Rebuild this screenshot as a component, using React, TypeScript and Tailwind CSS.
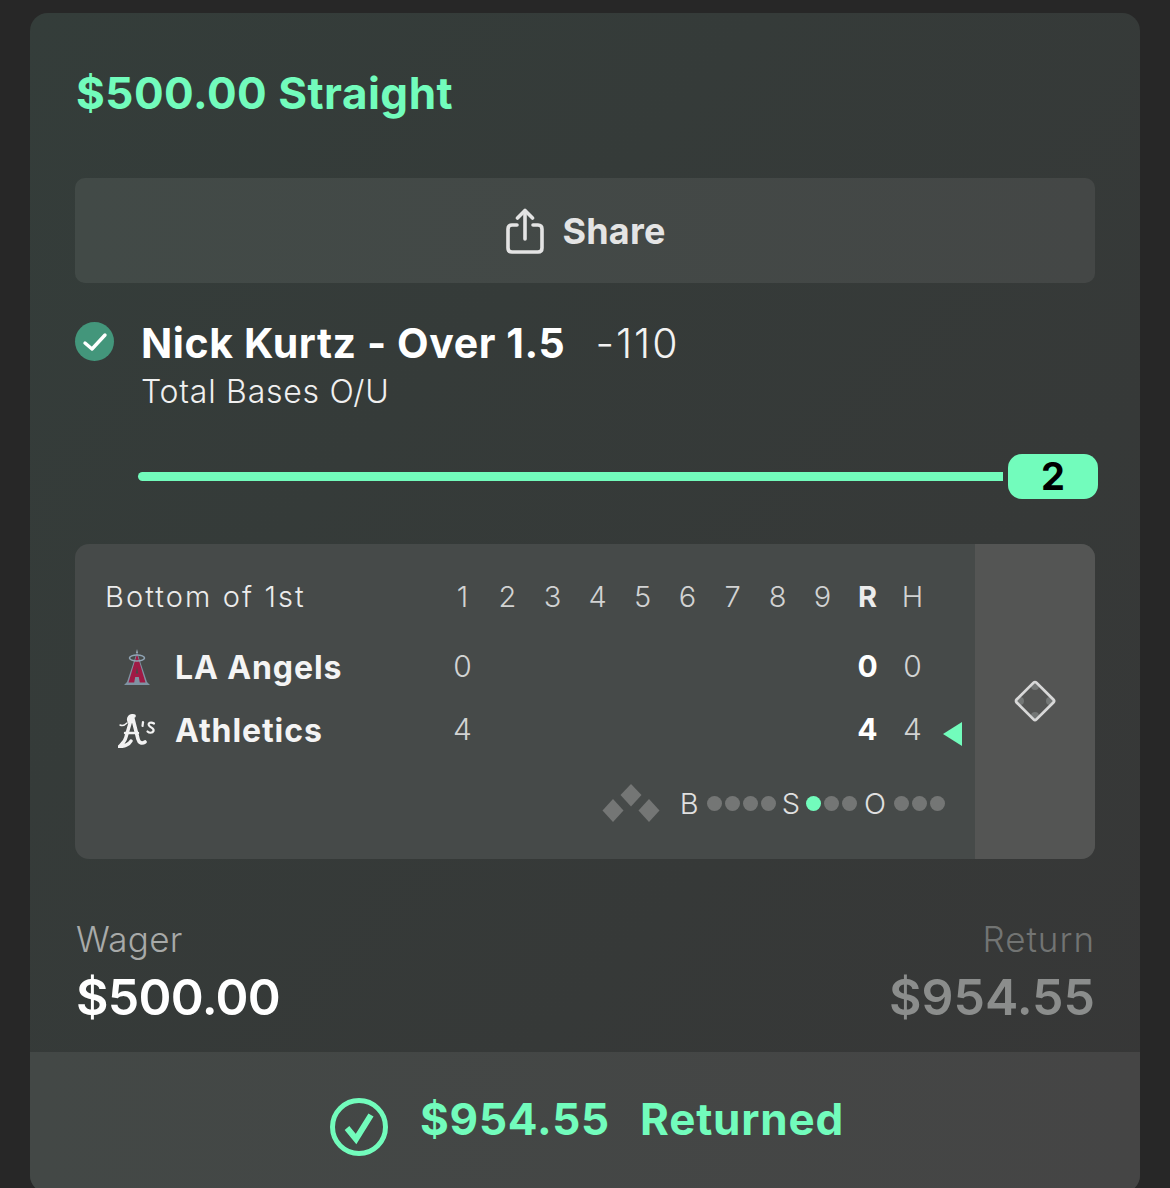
const font = { fontFamily: "Inter, sans-serif" };

const innings = ["1", "2", "3", "4", "5", "6", "7", "8", "9"];

const AngelsLogo = () => (
  <svg width="28" height="38" viewBox="0 0 28 38">
    <path d="M14 0 L15 4 H13 Z" fill="#9fb0bd" />
    <path d="M14 3 L24 33 L27 36 H1 L4 33 Z" fill="#7f93a3" />
    <path d="M14 5 L22.5 33.5 H16.8 L15.8 28 H12.2 L11.2 33.5 H5.5 Z" fill="#a01a45" />
    <path d="M14 18 L15.2 24.5 H12.8 Z" fill="#474a49" />
    <ellipse cx="14" cy="9" rx="7.5" ry="3" fill="none" stroke="#8fa3b3" strokeWidth="1.6" />
  </svg>
);

const AthleticsLogo = () => (
  <svg width="38" height="34" viewBox="0 0 38 34" fill="none" stroke="#f2f2f2" strokeLinecap="round">
    <path d="M16 2 C12 1 10 4 11 7 L15 5 L20 25 C21 29 24 30 27 28" strokeWidth="3.6" />
    <path d="M13 6 L8 23 C7 28 4 30 1 33 C6 32 11 31 13 27" strokeWidth="3.4" />
    <path d="M7 19 H20" strokeWidth="2.4" />
    <path d="M2 11 C4 12 7 11 9 9" strokeWidth="1.4" />
    <path d="M25 8 L24.5 12" strokeWidth="2.2" />
    <path d="M36 9.5 C33 7.5 29.5 9 31 11.5 C32.5 14 36.5 14 35.5 17 C34.5 19.5 31 19 29.5 17.5" strokeWidth="2.2" />
  </svg>
);

const ShareIcon = () => (
  <svg width="38" height="46" viewBox="0 0 38 46" fill="none" stroke="#e4e4e4" strokeWidth="3.6" strokeLinecap="round" strokeLinejoin="round">
    <path d="M11 17 H6 Q2 17 2 21 V40 Q2 44 6 44 H32 Q36 44 36 40 V21 Q36 17 32 17 H27" />
    <path d="M19 31 V3" />
    <path d="M11.5 10 L19 2.5 L26.5 10" />
  </svg>
);

const Dots = ({ count, active = -1 }: { count: number; active?: number }) => (
  <div className="flex gap-[3px]">
    {Array.from({ length: count }).map((_, i) => (
      <span
        key={i}
        className={i === active ? "size-[15px] rounded-full bg-[#72fcbc]" : "size-[15px] rounded-full bg-[#747675]"}
      />
    ))}
  </div>
);

const TeamRow = ({
  logo,
  name,
  first,
  total,
  hits,
  batting,
}: {
  logo: React.ReactNode;
  name: string;
  first: string;
  total: string;
  hits: string;
  batting?: boolean;
}) => (
  <div className="flex h-[63px] items-center">
    <div className="flex w-[73px] shrink-0 justify-center pr-[3px]">{logo}</div>
    <span className="mt-[1px] w-[265px] shrink-0 text-[32px] font-bold tracking-[0.9px] text-[#f4f4f4]">{name}</span>
    <div className="-mt-[2px] grid w-[495px] shrink-0 grid-cols-11 text-center text-[30px] font-light text-[#d2d3d3]">
      <span>{first}</span>
      <span className="col-start-10 font-bold text-white">{total}</span>
      <span>{hits}</span>
    </div>
    {batting && (
      <svg className="ml-[8px] mt-[6px]" width="19" height="24" viewBox="0 0 19 24">
        <path d="M0 12 L19 0 V24 Z" fill="#72fcbc" />
      </svg>
    )}
  </div>
);

export default function App() {
  return (
    <div className="h-[1188px] overflow-hidden bg-[#272727] pl-[30px] pr-[30px] pt-[13px]" style={font}>
      <div className="relative h-[1180px] rounded-[18px] bg-gradient-to-br from-[#343d3a] to-[#373737] px-[45px]">
        <h1 className="flex h-[165px] items-start pl-[1px] pt-[50px] text-[44px] leading-[60px] font-bold tracking-[0.5px] text-[#72fcbc]">
          $500.00 Straight
        </h1>

        <button className="flex h-[105px] w-full items-center justify-center gap-[18px] rounded-[10px] bg-gradient-to-r from-[#424a47] to-[#444746] pl-[2px] text-[36px] font-bold tracking-[0.2px] text-[#e4e4e4]">
          <ShareIcon />
          Share
        </button>

        <div className="mt-[35px] flex h-[94px] gap-[28px]">
          <span className="mt-[4px] flex size-[39px] shrink-0 items-center justify-center rounded-full bg-[#43967b]">
            <svg width="26" height="22" viewBox="0 0 26 22" fill="none" stroke="#fff" strokeWidth="3.4" strokeLinecap="round" strokeLinejoin="round">
              <path d="M3 12 L10 18 L23 4" />
            </svg>
          </span>
          <div className="-ml-[1px]">
            <div className="flex items-baseline gap-[30px] leading-[50px]">
              <span className="text-[41px] font-bold tracking-[0.6px] text-white">Nick Kurtz - Over 1.5</span>
              <span className="text-[41px] font-light tracking-[2px] text-[#f2f2f2]">-110</span>
            </div>
            <div className="text-[32px] leading-[47px] font-light tracking-[0.75px] text-[#f0f0f0]">Total Bases O/U</div>
          </div>
        </div>

        <div className="mt-[42px] flex h-[45px] items-center pl-[63px]">
          <div className="h-[9px] w-[865px] shrink-0 rounded-l-full bg-[#72fcbc]" />
          <span className="ml-[5px] flex h-[45px] w-[90px] shrink-0 items-center justify-center rounded-[14px] bg-[#72fcbc] text-[38px] font-bold text-black">
            2
          </span>
        </div>

        <div className="mt-[45px] flex h-[315px] overflow-hidden rounded-[14px] bg-[#464a49]">
          <div className="w-[900px] shrink-0">
            <div className="mt-[30px] flex h-[46px] items-center">
              <span className="w-[365px] shrink-0 pl-[30px] text-[29px] font-light tracking-[2.1px] text-[#ececec]">
                Bottom of 1st
              </span>
              <div className="grid w-[495px] shrink-0 grid-cols-11 text-center text-[29px] font-light text-[#d2d3d3]">
                {innings.map((inning) => (
                  <span key={inning}>{inning}</span>
                ))}
                <span className="font-bold text-[#ececec]">R</span>
                <span>H</span>
              </div>
            </div>

            <div className="mt-[16px] pl-[27px]">
              <TeamRow logo={<AngelsLogo />} name="LA Angels" first="0" total="0" hits="0" />
              <TeamRow logo={<AthleticsLogo />} name="Athletics" first="4" total="4" hits="4" batting />
            </div>

            <div className="mt-[20px] flex items-center justify-end pr-[30px]">
              <svg className="mr-[20px]" width="58" height="40" viewBox="0 0 58 40" fill="#747675">
                <path d="M29 0 L39.5 11 L29 22.5 L18.5 11 Z" />
                <path d="M11 15 L21.5 26.5 L11 38 L0.5 26.5 Z" />
                <path d="M47 15 L57.5 26.5 L47 38 L36.5 26.5 Z" />
              </svg>
              <span className="mr-[8px] text-[29px] font-light text-[#e0e0e0]">B</span>
              <Dots count={4} />
              <span className="mx-[6px] text-[29px] font-light text-[#e0e0e0]">S</span>
              <Dots count={3} active={0} />
              <span className="ml-[7px] mr-[8px] text-[29px] font-light text-[#e0e0e0]">O</span>
              <Dots count={3} />
            </div>
          </div>

          <div className="flex flex-1 justify-center bg-[#545554] pt-[136px]">
            <svg width="42" height="42" viewBox="0 0 42 42" fill="none">
              <circle cx="21" cy="6" r="4" fill="#737675" />
              <circle cx="21" cy="36" r="4" fill="#737675" />
              <circle cx="6" cy="21" r="4" fill="#737675" />
              <circle cx="36" cy="21" r="4" fill="#737675" />
              <rect x="7" y="7" width="28" height="28" transform="rotate(45 21 21)" rx="2" stroke="#d8d8d8" strokeWidth="2.8" />
            </svg>
          </div>
        </div>

        <div className="mt-[55px] flex justify-between">
          <div className="pl-[1px]">
            <div className="text-[35px] leading-[50px] font-light tracking-[0.3px] text-[#a8aaa9]">Wager</div>
            <div className="text-[50px] leading-[66px] font-semibold tracking-[-0.7px] text-white">$500.00</div>
          </div>
          <div className="text-right">
            <div className="text-[35px] leading-[50px] font-light tracking-[1px] text-[#727473]">Return</div>
            <div className="text-[50px] leading-[66px] font-semibold text-[#8b8d8c]">$954.55</div>
          </div>
        </div>

        <div className="absolute inset-x-0 top-[1039px] flex h-[141px] items-center justify-center overflow-hidden rounded-b-[18px] bg-gradient-to-r from-[#434846] to-[#454545] pb-[8px] pl-[4px] text-[44px] font-bold tracking-[0.8px] text-[#72fcbc]">
          <svg className="mr-[32px] mt-[16px]" width="58" height="58" viewBox="0 0 58 58" fill="none" stroke="#72fcbc">
            <circle cx="29" cy="29" r="26.5" strokeWidth="5" />
            <path d="M17 30 L26 41 L41 17" strokeWidth="6" />
          </svg>
          <span className="mr-[30px]">$954.55</span>
          <span>Returned</span>
        </div>
      </div>
    </div>
  );
}
